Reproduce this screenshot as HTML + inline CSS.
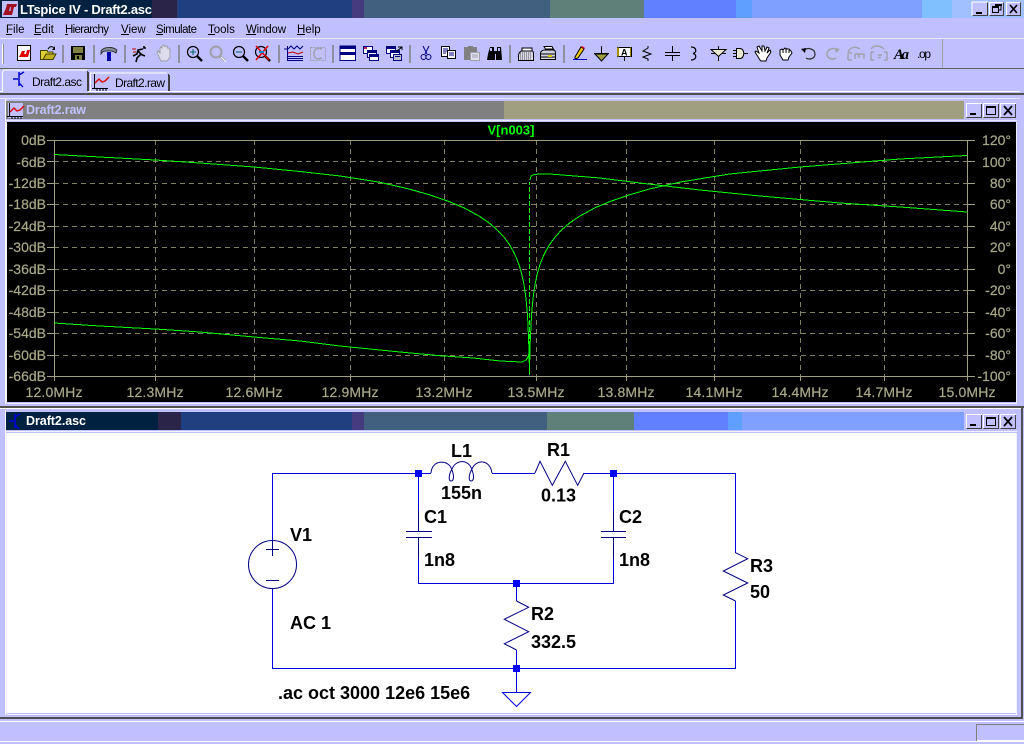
<!DOCTYPE html>
<html><head><meta charset="utf-8"><title>LTspice IV - Draft2.asc</title>
<style>
html,body{margin:0;padding:0;background:#c0c0ff;width:1024px;height:744px;overflow:hidden}
svg{display:block;font-family:"Liberation Sans",sans-serif}
.m{font-size:11.5px;fill:#000}
.l{font-size:14px;fill:#a8a888;stroke:#a8a888;stroke-width:.2}
.s{font-size:18px;font-weight:bold;fill:#000}
.g{stroke:#808060;stroke-width:1;stroke-dasharray:5 4;fill:none}
.t{stroke:#a0a080;stroke-width:1}
.i{fill:none;stroke:#000;stroke-width:1}
</style></head><body>
<svg width="1024" height="744" viewBox="0 0 1024 744" xmlns="http://www.w3.org/2000/svg">
<rect width="1024" height="744" fill="#c0c0ff"/>

<!-- main title bar -->
<g shape-rendering="crispEdges">
<rect x="0" y="0" width="152" height="18" fill="#00213f"/>
<rect x="152" y="0" width="25" height="18" fill="#2a2448"/>
<rect x="177" y="0" width="175" height="18" fill="#1f3f80"/>
<rect x="352" y="0" width="12" height="18" fill="#453b7e"/>
<rect x="364" y="0" width="186" height="18" fill="#41607f"/>
<rect x="550" y="0" width="94" height="18" fill="#5f8078"/>
<rect x="644" y="0" width="92" height="18" fill="#6080ff"/>
<rect x="736" y="0" width="16" height="18" fill="#5fa0ff"/>
<rect x="752" y="0" width="170" height="18" fill="#80a0ff"/>
<rect x="922" y="0" width="30" height="18" fill="#80c0ff"/>
<rect x="952" y="0" width="72" height="18" fill="#a0c0ff"/>
<rect x="2" y="1" width="16" height="16" fill="#c0c0ff"/>
</g>
<path d="M5 15L3 15 6 8 7 4 11 4 9 11 12 11 11 15ZM10 4H17L16 7H14L12 15H10L11 7H9Z" fill="#a01020"/>
<text x="20" y="14" font-size="13" font-weight="bold" fill="#fff" textLength="132">LTspice IV - Draft2.asc</text>
<!-- main caption buttons -->
<g shape-rendering="crispEdges">
<rect x="972" y="2" width="16" height="14" fill="#c0c0ff" stroke="#fff" stroke-width="0"/>
<path d="M972 16V2H988M972 2" stroke="#fff" fill="none"/><path d="M972.5 15.5H987.5V2.5" stroke="#404040" fill="none"/>
<rect x="976" y="12" width="6" height="2" fill="#000"/>
<rect x="989" y="2" width="15" height="14" fill="#c0c0ff"/>
<path d="M989.5 15.5V2.5H1003" stroke="#fff" fill="none"/><path d="M989.5 15.5H1003.5V2.5" stroke="#404040" fill="none"/>
<rect x="992.5" y="6.5" width="6" height="6" fill="none" stroke="#000"/><path d="M995 4.5H1001V10H999" fill="none" stroke="#000"/><rect x="992" y="6" width="7" height="2" fill="#000"/><rect x="995" y="4" width="7" height="2" fill="#000"/>
<rect x="1006" y="2" width="15" height="14" fill="#c0c0ff"/>
<path d="M1006.5 15.5V2.5H1020" stroke="#fff" fill="none"/><path d="M1006.5 15.5H1020.5V2.5" stroke="#404040" fill="none"/>
</g>
<path d="M1010 5L1017 13M1017 5L1010 13" stroke="#000" stroke-width="1.7"/>

<!-- menu -->
<text class="m" x="6" y="33">File</text>
<text class="m" x="34" y="33">Edit</text>
<text class="m" x="65" y="33" textLength="44">Hierarchy</text>
<text class="m" x="121" y="33">View</text>
<text class="m" x="156" y="33" textLength="41">Simulate</text>
<text class="m" x="208" y="33">Tools</text>
<text class="m" x="246" y="33" textLength="40">Window</text>
<text class="m" x="297" y="33">Help</text>
<g shape-rendering="crispEdges" fill="#000">
<rect x="6" y="34" width="6" height="1"/><rect x="34" y="34" width="7" height="1"/><rect x="65" y="34" width="3" height="1"/><rect x="121" y="34" width="8" height="1"/><rect x="156" y="34" width="7" height="1"/><rect x="208" y="34" width="7" height="1"/><rect x="246" y="34" width="10" height="1"/><rect x="297" y="34" width="8" height="1"/>
</g>

<!-- toolbar chrome -->
<g shape-rendering="crispEdges">
<rect x="0" y="38" width="1024" height="1" fill="#e8e8f8"/>
<rect x="0" y="68" width="1024" height="1" fill="#606060"/>
<rect x="942" y="39" width="1" height="29" fill="#a0a0b0"/>
<rect x="2" y="44" width="1" height="20" fill="#fff"/><rect x="3" y="44" width="1" height="20" fill="#909090"/>
<g fill="#9090a0">
<rect x="62" y="45" width="2" height="18"/><rect x="93" y="45" width="2" height="18"/><rect x="124" y="45" width="2" height="18"/><rect x="178" y="45" width="2" height="18"/><rect x="278" y="45" width="2" height="18"/><rect x="332" y="45" width="2" height="18"/><rect x="409" y="45" width="2" height="18"/><rect x="509" y="45" width="2" height="18"/><rect x="563" y="45" width="2" height="18"/>
</g>
</g>

<!-- toolbar icons -->
<!-- new -->
<g shape-rendering="crispEdges"><rect x="17.5" y="45.5" width="13" height="15" fill="#fff" stroke="#000"/></g>
<path d="M19 57L22 51H25L24 54H26L27 50H30L28 57H23Z" fill="#e00000"/>
<!-- open -->
<path d="M40.5 59.5V50.5H47L48 52H53V59.5Z" fill="#e0d030" stroke="#404000" shape-rendering="crispEdges"/>
<path d="M43 59.5L46 54H56L53 59.5Z" fill="#c0b020" stroke="#404000"/>
<path d="M48 49C50 46 52 46 54 48" fill="none" stroke="#000"/><path d="M55 46V50H52Z" fill="#000"/>
<!-- save -->
<g shape-rendering="crispEdges"><rect x="71" y="46" width="14" height="14" fill="#000"/><rect x="73" y="47" width="10" height="6" fill="#808040"/><rect x="75" y="55" width="7" height="5" fill="#808040"/><rect x="77" y="56" width="2" height="3" fill="#000"/></g>
<!-- hammer -->
<path d="M101 51C103 47 112 46 117 50L116 53C113 51 111 51 110 51H106C104 51 103 51 101 54Z" fill="#808890" stroke="#202020" stroke-width=".8"/>
<rect x="107" y="52" width="4" height="9" fill="#0000b0" shape-rendering="crispEdges"/>
<!-- run -->
<path d="M144 46V48H146M133 56L137 54 138 50 143 49M138 51L141 54 137 58 136 62M140 54L145 56" fill="none" stroke="#000" stroke-width="1.6"/>
<path d="M132 49H136M133 52H136" stroke="#c00000"/>
<!-- disabled hand -->
<path d="M159 57L157 52 158 51 160 53V48L161 47 162 48V46L164 45 165 47V46.5L167 46 167.5 48 169 48 170 50 170 57 167 61H161Z" fill="#dcdcec" stroke="#a0a0a8"/>
<!-- zoom in -->
<g fill="none">
<circle cx="193" cy="52" r="5.5" stroke="#000" stroke-width="1.2"/><path d="M197 56L202 61" stroke="#000" stroke-width="2.4"/><path d="M190 52H196M193 49V55" stroke="#006060"/>
<circle cx="216" cy="52" r="5.5" stroke="#a0a0a8" stroke-width="2"/><path d="M220 56L225 61" stroke="#a0a0a8" stroke-width="2.6"/><path d="M221 57L226 62" stroke="#fff"/>
<circle cx="239" cy="52" r="5.5" stroke="#000" stroke-width="1.2"/><path d="M243 56L248 61" stroke="#000" stroke-width="2.4"/><path d="M236 52H242" stroke="#006060"/>
<circle cx="261" cy="52" r="5.5" stroke="#000" stroke-width="1.2"/><path d="M265 56L270 61" stroke="#000" stroke-width="2.4"/><path d="M256 46L269 60M268 46L256 60" stroke="#e00000" stroke-width="1.5"/><path d="M259 52H264" stroke="#0090d0" stroke-width="2"/>
</g>
<!-- plot -->
<g shape-rendering="crispEdges" fill="none">
<path d="M287.5 46V60.5H303M287.5 49H284" stroke="#000080"/>
<path d="M288 49L291 46 294 49 297 46 300 49 303 46" stroke="#000080" shape-rendering="auto"/>
<path d="M288 53L293 52 298 54 303 52" stroke="#c00000" shape-rendering="auto"/>
<path d="M288 56.5H303M288 58.5H303" stroke="#000080"/>
<path d="M310.5 47.5H325.5V60.5H310.5Z" stroke="#a0a0a8" stroke-dasharray="2 1"/>
</g>
<path d="M322 49C316 47 314 50 314 54S317 60 322 58" fill="none" stroke="#a0a0a8" stroke-width="1.5"/>
<!-- windows -->
<g shape-rendering="crispEdges">
<rect x="340" y="46" width="15.5" height="14.5" fill="#fff" stroke="#000080"/><rect x="340" y="46" width="16" height="3" fill="#000080"/><rect x="340" y="52" width="16" height="1" fill="#000080"/><rect x="340" y="53" width="16" height="2" fill="#000080"/>
<rect x="363.5" y="46.5" width="9" height="7" fill="#fff" stroke="#000080"/><rect x="364" y="47" width="3" height="2" fill="#c02060"/>
<rect x="367.5" y="50.5" width="9" height="7" fill="#fff" stroke="#000080"/><rect x="368" y="51" width="9" height="2" fill="#000080"/>
<rect x="369.5" y="54.5" width="9" height="6" fill="#fff" stroke="#000080"/><rect x="370" y="55" width="9" height="2" fill="#000080"/>
<rect x="386.5" y="46.5" width="9" height="7" fill="#fff" stroke="#000080"/><rect x="387" y="47" width="9" height="2" fill="#000080"/>
<rect x="390.5" y="50.5" width="9" height="7" fill="#fff" stroke="#000080"/><rect x="391" y="51" width="9" height="2" fill="#000080"/>
<rect x="393.5" y="54.5" width="8" height="6" fill="#c0c0d0" stroke="#000080"/><rect x="395" y="56" width="5" height="1" fill="#000080"/>
</g>
<path d="M397 51L402 47M398 47H402V50" fill="none" stroke="#000"/>
<!-- scissors -->
<path d="M423 46L427 54M429 46L425 54" stroke="#000080" fill="none" stroke-width="1"/><circle cx="423.5" cy="57" r="2.5" fill="none" stroke="#000080"/><circle cx="428.5" cy="57" r="2.5" fill="none" stroke="#000080"/>
<!-- copy -->
<g shape-rendering="crispEdges">
<rect x="441.5" y="46.5" width="8" height="10" fill="#fff" stroke="#000"/><path d="M443 49H448M443 51H448M443 53H446" stroke="#000080"/>
<rect x="447.5" y="50.5" width="8" height="8" fill="#fff" stroke="#000"/><path d="M449 53H454M449 55H454" stroke="#000080"/>
<!-- paste -->
<rect x="464" y="47" width="13" height="13" fill="#808080"/><rect x="468" y="46" width="5" height="3" fill="#808080"/><rect x="470.5" y="52.5" width="9" height="8" fill="#e0e0f0" stroke="#a0a0a8"/><path d="M472 55H478M472 57H478" stroke="#a0a0a8"/>
</g>
<!-- binoculars -->
<path d="M490 47H494V51H497V47H501L502 60H496V54H495V60H487L488 54Z" fill="#000"/><rect x="490" y="48" width="2" height="3" fill="#c0c0ff"/><rect x="498" y="48" width="2" height="3" fill="#c0c0ff"/>
<!-- preview / print -->
<path d="M522 48H532V52H522Z" fill="#fff" stroke="#000"/>
<path d="M518.5 55C519 52 521 51 522 51H532C533 51 533.5 52 533.5 54V60.5H518.5Z" fill="#d8d8e8" stroke="#000"/>
<path d="M520 53H532M520 55H532M520 57H532M520 59H532" stroke="#555" stroke-dasharray="1 1" shape-rendering="crispEdges"/>
<path d="M544 46.5H552L554 50H546Z" fill="#fff" stroke="#000"/>
<path d="M546 49H553" stroke="#000"/>
<path d="M540.5 53C541 51 543 50 545 50H553C555 50 555.5 51 555.5 53V59.5H540.5Z" fill="#d0d0e0" stroke="#000"/>
<path d="M541 54H555M541 57H555" stroke="#000" shape-rendering="crispEdges"/><rect x="548" y="55" width="4" height="2" fill="#e0d000"/>
<!-- pencil -->
<path d="M575 57L581 47 584 49 578 58 575 59Z" fill="#f0d000" stroke="#000"/><path d="M581 47L582 46 585 48 584 49Z" fill="#e00020"/>
<path d="M573 59.5H587" stroke="#0000c0" shape-rendering="crispEdges"/>
<!-- ground -->
<path d="M601.5 46V53.5M594 53.5H609" stroke="#000" shape-rendering="crispEdges"/>
<path d="M595 54L601.5 61 608 54Z" fill="#a0a040" stroke="#000"/>
<!-- label -->
<g shape-rendering="crispEdges"><rect x="617.5" y="47.5" width="14" height="9" fill="#fff" stroke="#000"/><path d="M617.5 47.5V56.5M618.5 47.5V56.5M630.5 47.5V56.5" stroke="#a09000"/><path d="M624.5 57V61" stroke="#000"/></g>
<text x="621" y="55.5" font-size="9" font-weight="bold" fill="#000">A</text>
<!-- R -->
<path d="M648 46V48L643 51 651 54 643 57 648 59 648 61" fill="none" stroke="#000"/>
<!-- C -->
<path d="M672.5 46V52M665 52.5H680M665 55.5H680M672.5 56V61" stroke="#000" shape-rendering="crispEdges"/>
<!-- L -->
<path d="M691 47C697 47 697 53 693 53.5 697 54 697 60 691 60" fill="none" stroke="#000" stroke-width="1.2"/>
<!-- D -->
<path d="M718.5 46V61M711 53.5H726" stroke="#000" fill="none" shape-rendering="crispEdges"/><path d="M711 49.5H726L718.5 56.5Z" fill="#e8e8d0" stroke="#000"/>
<path d="M733 53.5H736M733 50.5H736M733 56.5H736M742 53.5H748" stroke="#000" shape-rendering="crispEdges"/>
<path d="M736.5 49.5H740C745 49.5 745 59.5 740 59.5H736.5Z" transform="translate(0,-1)" fill="#e8e8d0" stroke="#000"/>
<!-- hands -->
<path d="M760 60L755 52 756 51 759 53 757 47 759 46 762 51 762 46 764 46 765 51 767 47 769 48 767 53 770 50 771 52 767 58 766 61H761Z" fill="#fff" stroke="#000"/>
<path d="M783 60L780 55V50L782 49 783 50 785 48 787 49 789 49 791 51 792 53 789 57 788 60Z" fill="#fff" stroke="#000"/>
<path d="M783 50V53M786 49V53M789 50V53" stroke="#000"/>
<!-- undo redo -->
<path d="M804 50C808 47 815 49 815 54S809 60 806 58" fill="none" stroke="#303030" stroke-width="1.2"/><path d="M801 49L806 48 805 53Z" fill="#000"/>
<path d="M838 50C834 47 827 49 827 54S833 60 836 58" fill="none" stroke="#a0a0a8" stroke-width="1.5"/><path d="M840 49L835 48 836 53Z" fill="#a0a0a8"/>
<!-- disabled rotate / mirror -->
<g fill="none" stroke="#a0a0a8" stroke-width="1.4">
<path d="M848 52C850 47 856 46 860 49M848 53V60M848 53H852M848 60H852M855 54H864V59M855 54V59M859 54V58"/>
<path d="M871 49C874 45 880 45 884 49M871 52H874M871 52V60H874M887 52H884M887 52V60H884M878 55H882M878 57.5H881"/>
</g>
<text x="894" y="59" font-size="15" font-weight="bold" font-style="italic" font-family="Liberation Serif" fill="#000" textLength="15">Aa</text>
<text x="917" y="58" font-size="12" fill="#000" textLength="14">.op</text>

<!-- tab strip -->
<g shape-rendering="crispEdges">
<rect x="0" y="91" width="1020" height="1" fill="#fff"/>
<rect x="0" y="93" width="1024" height="2" fill="#505050"/>
<rect x="0" y="98" width="1020" height="1" fill="#e8e8ff"/>
<path d="M2.5 91V72L4 70H87" stroke="#fff" fill="none"/>
<path d="M87.5 71V91" stroke="#404040" fill="none"/><path d="M88.5 72V91" stroke="#404040" fill="none"/>
<path d="M90.5 91V73H167" stroke="#fff" fill="none"/>
<path d="M168.5 74V91" stroke="#404040" fill="none"/><path d="M169.5 75V91" stroke="#404040" fill="none"/>
<rect x="3" y="91" width="85" height="1" fill="#c0c0ff"/>
</g>
<path d="M19 72V86M13 79H18M19 75L24 72M19 83L23 87" stroke="#0000d0" fill="none" stroke-width="1.5"/>
<text x="32" y="86" font-size="12" fill="#000" textLength="50">Draft2.asc</text>
<g shape-rendering="crispEdges" fill="none" stroke="#000"><path d="M94.5 74V88.5H108M92 88.5H94M97 89V91M100 89V91M103 89V91M106 89V91"/></g>
<path d="M95 83L99 79 102 82 105 81 109 77" fill="none" stroke="#e00000" stroke-width="1.4"/>
<text x="115" y="87" font-size="12" fill="#000" textLength="50">Draft2.raw</text>

<!-- graph window -->
<g shape-rendering="crispEdges">
<rect x="5" y="99" width="1" height="305" fill="#fff"/>
<rect x="6" y="101" width="498" height="18" fill="#808080"/>
<rect x="504" y="101" width="460" height="18" fill="#a0a080"/>
<rect x="6" y="120" width="1011" height="1" fill="#e8e8ff"/>
<rect x="7" y="122" width="1009" height="280" fill="#000"/>
<rect x="6" y="122" width="1" height="281" fill="#f0f0ff"/>
<rect x="7" y="403" width="1010" height="1" fill="#f0f0ff"/>
<rect x="1016" y="122" width="1" height="281" fill="#f0f0ff"/>
<rect x="0" y="406" width="1024" height="2" fill="#505050"/>
<rect x="0" y="408" width="1022" height="1" fill="#fff"/>
<rect x="8" y="103" width="15" height="15" fill="#c0c0ff" stroke="#000" stroke-width="0"/>
</g>
<g shape-rendering="crispEdges" fill="none" stroke="#000"><path d="M9.5 103V116.5H23M7 116.5H9M12 117V119M15 117V119M18 117V119M21 117V119"/></g>
<path d="M10 112L14 108 17 111 20 110 24 106" fill="none" stroke="#e00000" stroke-width="1.4"/>
<text x="26" y="114" font-size="12.5" font-weight="bold" fill="#c0c0ff" textLength="60">Draft2.raw</text>
<!-- graph buttons -->
<g shape-rendering="crispEdges">
<path d="M966.5 117V103.5H982" stroke="#fff" fill="none"/><path d="M966.5 117.5H981.5V104" stroke="#404040" fill="none"/><rect x="970" y="113" width="6" height="2" fill="#000"/>
<path d="M983.5 117V103.5H999" stroke="#fff" fill="none"/><path d="M983.5 117.5H998.5V104" stroke="#404040" fill="none"/><rect x="986.5" y="106.5" width="9" height="8" fill="none" stroke="#000"/><rect x="986" y="106" width="10" height="2" fill="#000"/>
<path d="M1000.5 117V103.5H1016" stroke="#fff" fill="none"/><path d="M1000.5 117.5H1015.5V104" stroke="#404040" fill="none"/>
</g>
<path d="M1004 106L1012 115M1012 106L1004 115" stroke="#000" stroke-width="1.7"/>

<!-- plot -->
<text x="511" y="134.500" font-size="13" font-weight="bold" fill="#00ff00" text-anchor="middle">V[n003]</text>
<g shape-rendering="crispEdges">
<path class="g" d="M54 161.500H967M54 183.500H967M54 204.500H967M54 226.500H967M54 247.500H967M54 269.500H967M54 290.500H967M54 312.500H967M54 333.500H967M54 355.500H967"/>
<path class="g" d="M155.500 140V376M254.500 140V376M350.500 140V376M444.500 140V376M536.500 140V376M626.500 140V376M714.500 140V376M800.500 140V376M884.500 140V376"/>
<path class="t" fill="none" d="M47 140.500H975M47 376.500H975M54.500 140V381M967.500 140V381"/>
<path class="t" fill="none" d="M47 161.500H54M47 183.500H54M47 204.500H54M47 226.500H54M47 247.500H54M47 269.500H54M47 290.500H54M47 312.500H54M47 333.500H54M47 355.500H54M967 161.500H975M967 183.500H975M967 204.500H975M967 226.500H975M967 247.500H975M967 269.500H975M967 290.500H975M967 312.500H975M967 333.500H975M967 355.500H975M155.500 376V381M254.500 376V381M350.500 376V381M444.500 376V381M536.500 376V381M626.500 376V381M714.500 376V381M800.500 376V381M884.500 376V381"/>
</g>
<g class="l" text-anchor="end">
<text x="46" y="145">0dB</text><text x="46" y="167">-6dB</text><text x="46" y="188">-12dB</text><text x="46" y="209">-18dB</text><text x="46" y="231">-24dB</text><text x="46" y="252">-30dB</text><text x="46" y="274">-36dB</text><text x="46" y="295">-42dB</text><text x="46" y="317">-48dB</text><text x="46" y="338">-54dB</text><text x="46" y="360">-60dB</text><text x="46" y="381">-66dB</text>
</g>
<g class="l" text-anchor="end">
<text x="1011" y="145">120°</text><text x="1011" y="167">100°</text><text x="1011" y="188">80°</text><text x="1011" y="209">60°</text><text x="1011" y="231">40°</text><text x="1011" y="252">20°</text><text x="1011" y="274">0°</text><text x="1011" y="295">-20°</text><text x="1011" y="317">-40°</text><text x="1011" y="338">-60°</text><text x="1011" y="360">-80°</text><text x="1011" y="381">-100°</text>
</g>
<g class="l" text-anchor="middle">
<text x="54" y="397" textLength="57">12.0MHz</text><text x="155" y="397" textLength="57">12.3MHz</text><text x="254" y="397" textLength="57">12.6MHz</text><text x="350" y="397" textLength="57">12.9MHz</text><text x="444" y="397" textLength="57">13.2MHz</text><text x="536" y="397" textLength="57">13.5MHz</text><text x="626" y="397" textLength="57">13.8MHz</text><text x="714" y="397" textLength="57">14.1MHz</text><text x="800" y="397" textLength="57">14.4MHz</text><text x="884" y="397" textLength="57">14.7MHz</text><text x="967" y="397" textLength="57">15.0MHz</text>
</g>
<g fill="none" stroke="#00ff00" stroke-width="1" shape-rendering="crispEdges">
<path d="M54 154.500L100 157L155 160L200 163L254 167L300 171.500L340 176L379.500 182.200L409.500 189.100L429.500 194.800L449.500 201.700L464.500 208.100L479.500 216.300L489.500 223.200L497.500 230.200L504.500 237.800L509.500 244.700L513.500 251.700L516.500 258.100L519.500 266.300L521.500 273.200L523.500 282.200L524.500 287.800L525.500 294.700L526.500 303.700L527.500 316.300L528 325L528.500 337.800L529 350L529.500 375L530 345L530.500 337.800L531 325L531.500 316L532.500 303.700L533.500 294.700L534.500 287.800L535.500 282L537.500 273L539.500 266L542.500 258L545.500 251.700L549.500 244.700L554.500 237.800L561.500 230L569.500 223L579.500 216.300L594.500 208L609.500 201.700L629.500 194.800L649.500 189L679.500 182.200L729.500 174L800 167L850 163L900 159L967 155.500"/>
<path d="M54 323L100 326L155 329L200 332L254 337L300 341L340 346L400 352L440 355.700L473 358L500 361L522 362L526 360L528 357L529 353"/>
<path d="M529.500 353V182" stroke-dasharray="5 2"/>
<path d="M530 180L531 176L534 174.500L540 174L550 174L600 178L640 183L700 190L760 196L840 203L900 207L967 212"/>
</g>

<!-- schematic window -->
<g shape-rendering="crispEdges">
<rect x="5" y="410" width="1" height="305" fill="#fff"/>
<rect x="6" y="412" width="152" height="18" fill="#00213f"/>
<rect x="158" y="412" width="23" height="18" fill="#2a2448"/>
<rect x="181" y="412" width="171" height="18" fill="#1f3f80"/>
<rect x="352" y="412" width="12" height="18" fill="#453b7e"/>
<rect x="364" y="412" width="183" height="18" fill="#41607f"/>
<rect x="547" y="412" width="87" height="18" fill="#5f8078"/>
<rect x="634" y="412" width="94" height="18" fill="#6080ff"/>
<rect x="728" y="412" width="14" height="18" fill="#5fa0ff"/>
<rect x="742" y="412" width="222" height="18" fill="#80a0ff"/>
<rect x="6" y="431" width="1011" height="1" fill="#f0f0ff"/>
<rect x="7" y="433" width="1009" height="280" fill="#fff"/>
<rect x="6" y="433" width="1" height="281" fill="#f0f0ff"/>
<rect x="7" y="714" width="1010" height="1" fill="#f0f0ff"/>
<rect x="1016" y="433" width="1" height="282" fill="#f0f0ff"/>
<rect x="0" y="717" width="1022" height="2" fill="#505050"/>
<rect x="1021" y="407" width="2" height="312" fill="#505050"/>
<rect x="0" y="721" width="1024" height="1" fill="#fff"/>
<rect x="976" y="724" width="48" height="1" fill="#808080"/>
<rect x="976" y="724" width="1" height="17" fill="#808080"/>
<rect x="977" y="740" width="47" height="1" fill="#fff"/>
<rect x="0" y="741" width="1024" height="1" fill="#fff"/>
</g>
<path d="M15 414V428M9 421H14M15 417L20 414M15 425L19 429" stroke="#0000e0" fill="none" stroke-width="1.5"/>
<text x="26" y="425" font-size="12.5" font-weight="bold" fill="#fff" textLength="60">Draft2.asc</text>
<g shape-rendering="crispEdges">
<path d="M966.5 428V414.5H982" stroke="#fff" fill="none"/><path d="M966.5 428.5H981.5V415" stroke="#404040" fill="none"/><rect x="970" y="424" width="6" height="2" fill="#000"/>
<path d="M983.5 428V414.5H999" stroke="#fff" fill="none"/><path d="M983.5 428.5H998.5V415" stroke="#404040" fill="none"/><rect x="986.5" y="417.5" width="9" height="8" fill="none" stroke="#000"/><rect x="986" y="417" width="10" height="2" fill="#000"/>
<path d="M1000.5 428V414.5H1016" stroke="#fff" fill="none"/><path d="M1000.5 428.5H1015.5V415" stroke="#404040" fill="none"/>
</g>
<path d="M1004 417L1012 426M1012 417L1004 426" stroke="#000" stroke-width="1.7"/>

<!-- wires -->
<g shape-rendering="crispEdges" fill="none" stroke="#0000e0">
<path d="M272.5 540V473.5H431M492 473.5H535M584 473.5H735.5V553M735.5 601V668.5H272.5V589"/>
<path d="M418.5 473V511M418.5 558V583.5H613.5V558M613.5 511V473"/>
<path d="M516.5 583V601M516.5 650V692"/>
</g>
<!-- symbols -->
<g fill="none" stroke="#000080" stroke-width="1">
<circle cx="272.5" cy="564.5" r="24"/>
<path d="M272.5 540V556M266 549.5H279M266 580.5H279" shape-rendering="crispEdges"/>
<path d="M418.5 511V531M418.5 537V558M406 531.5H432M406 537.5H432M613.5 511V531M613.5 537V558M601 531.5H626M601 537.5H626" shape-rendering="crispEdges"/>
<path d="M431 473C432 459 449 459 452 470C455 478 453 481 451 481C448 481 449 474 452 469C456 459 469 459 472 470C475 478 473 481 471 481C468 481 469 474 472 469C476 459 490 459 492 473"/>
<path d="M535 473L540 461.3L552.3 485.3L565.3 461.3L577.7 485.3L584 473"/>
<path d="M735.5 552.7L747.7 558.7L723.3 571L747.7 583L723.3 595L735.5 601"/>
<path d="M516.5 601L528.7 607.3L504.3 619.3L528.7 631.7L504.3 643.7L516.5 650"/>
</g>
<path d="M502.5 692.5H530.5L516.5 706.5Z" fill="none" stroke="#0000e0"/>
<g fill="#0000ff" shape-rendering="crispEdges">
<rect x="415" y="470" width="7" height="7"/><rect x="610" y="470" width="7" height="7"/><rect x="513" y="580" width="7" height="7"/><rect x="513" y="665" width="7" height="7"/>
</g>
<!-- labels -->
<text class="s" x="451" y="457">L1</text>
<text class="s" x="441" y="499">155n</text>
<text class="s" x="547" y="456">R1</text>
<text class="s" x="541" y="501.500">0.13</text>
<text class="s" x="424" y="523">C1</text>
<text class="s" x="424" y="566">1n8</text>
<text class="s" x="619" y="523">C2</text>
<text class="s" x="619" y="566">1n8</text>
<text class="s" x="290" y="541">V1</text>
<text class="s" x="290" y="629">AC 1</text>
<text class="s" x="750" y="572">R3</text>
<text class="s" x="750" y="598">50</text>
<text class="s" x="531" y="620">R2</text>
<text class="s" x="531" y="648">332.5</text>
<text class="s" x="278" y="699">.ac oct 3000 12e6 15e6</text>
</svg>
</body></html>
